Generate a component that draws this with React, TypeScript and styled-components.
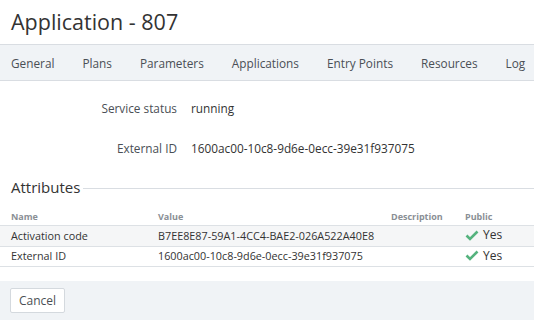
import React from "react";
import styled, { createGlobalStyle } from "styled-components";

const GlobalStyle = createGlobalStyle`
  body {
    margin: 0;
    font-family: "Open Sans", "Liberation Sans", sans-serif;
    color: #333;
    background: #fff;
  }
`;

const Page = styled.div`
  width: 534px;
  height: 320px;
  display: flex;
  flex-direction: column;
  overflow: hidden;
`;

const Title = styled.h1`
  margin: 0;
  padding: 8px 11px 0;
  height: 36px;
  font-size: 21.5px;
  font-weight: 400;
  line-height: 28px;
  color: #333;
`;

const Tabs = styled.nav`
  display: flex;
  height: 35px;
  align-items: center;
  background: #f0f3f6;
  border-top: 1px solid #d9dde2;
  border-bottom: 1px solid #d9dde2;
  padding-left: 11px;
  white-space: nowrap;
`;

const Tab = styled.span`
  font-size: 11.8px;
  color: #4a4f55;
  margin-right: 28px;
`;

const Details = styled.div`
  display: grid;
  grid-template-columns: 177px 1fr;
  column-gap: 14px;
  row-gap: 22px;
  padding: 18px 0 0;
  font-size: 11.8px;
  line-height: 18px;
`;

const Label = styled.span`
  text-align: right;
  color: #4a4f55;
`;

const Value = styled.span`
  color: #333;
`;

const SectionTitle = styled.div`
  display: flex;
  align-items: center;
  margin: 20px 0 0 11px;
  font-size: 15px;
  line-height: 20px;
  color: #333;
  &::after {
    content: "";
    flex: 1;
    height: 1px;
    background: #d9dde2;
    margin-left: 3px;
    margin-top: 2px;
  }
`;

const Table = styled.table`
  width: 100%;
  border-collapse: collapse;
  margin-top: 13px;
  font-size: 10.8px;
`;

const Th = styled.th<{ $w?: number }>`
  text-align: left;
  font-size: 9px;
  font-weight: 700;
  color: #8a8f95;
  padding: 0 0 1px 11px;
  width: ${(p) => (p.$w ? `${p.$w}px` : "auto")};
  border-bottom: 1px solid #dde1e5;
  line-height: 14px;
`;

const Tr = styled.tr<{ $shade?: boolean }>`
  background: ${(p) => (p.$shade ? "#f5f6f7" : "#fff")};
`;

const Td = styled.td`
  padding: 0 0 0 11px;
  height: 18px;
  line-height: 18px;
  border-bottom: 1px solid #dde1e5;
  color: #333;
  white-space: nowrap;
`;

const Yes = styled.span`
  display: inline-flex;
  align-items: center;
  gap: 4px;
  font-size: 12px;
`;

const Footer = styled.div`
  margin-top: auto;
  height: 39px;
  background: #f0f3f6;
  display: flex;
  align-items: center;
  padding-left: 10px;
`;

const Button = styled.button`
  font-family: inherit;
  font-size: 12px;
  color: #4a4f55;
  background: #fff;
  border: 1px solid #d4d9de;
  border-radius: 2px;
  height: 25px;
  padding: 0 8px;
`;

const Check = () => (
  <svg width="14" height="11" viewBox="0 0 14 11">
    <path d="M1.5 5.5 L5 9 L12.5 1.5" fill="none" stroke="#55b37e" strokeWidth="2.6" />
  </svg>
);

const tabs = ["General", "Plans", "Parameters", "Applications", "Entry Points", "Resources", "Log"];

const rows = [
  { name: "Activation code", value: "B7EE8E87-59A1-4CC4-BAE2-026A522A40E8" },
  { name: "External ID", value: "1600ac00-10c8-9d6e-0ecc-39e31f937075" },
];

export default function App() {
  return (
    <Page>
      <GlobalStyle />
      <Title>Application - 807</Title>
      <Tabs>
        {tabs.map((t) => (
          <Tab key={t}>{t}</Tab>
        ))}
      </Tabs>
      <Details>
        <Label>Service status</Label>
        <Value>running</Value>
        <Label>External ID</Label>
        <Value>1600ac00-10c8-9d6e-0ecc-39e31f937075</Value>
      </Details>
      <SectionTitle>Attributes</SectionTitle>
      <Table>
        <thead>
          <tr>
            <Th $w={136}>Name</Th>
            <Th $w={222}>Value</Th>
            <Th $w={63}>Description</Th>
            <Th>Public</Th>
          </tr>
        </thead>
        <tbody>
          {rows.map((r, i) => (
            <Tr key={r.name} $shade={i === 0}>
              <Td>{r.name}</Td>
              <Td>{r.value}</Td>
              <Td />
              <Td>
                <Yes>
                  <Check />
                  Yes
                </Yes>
              </Td>
            </Tr>
          ))}
        </tbody>
      </Table>
      <Footer>
        <Button>Cancel</Button>
      </Footer>
    </Page>
  );
}
